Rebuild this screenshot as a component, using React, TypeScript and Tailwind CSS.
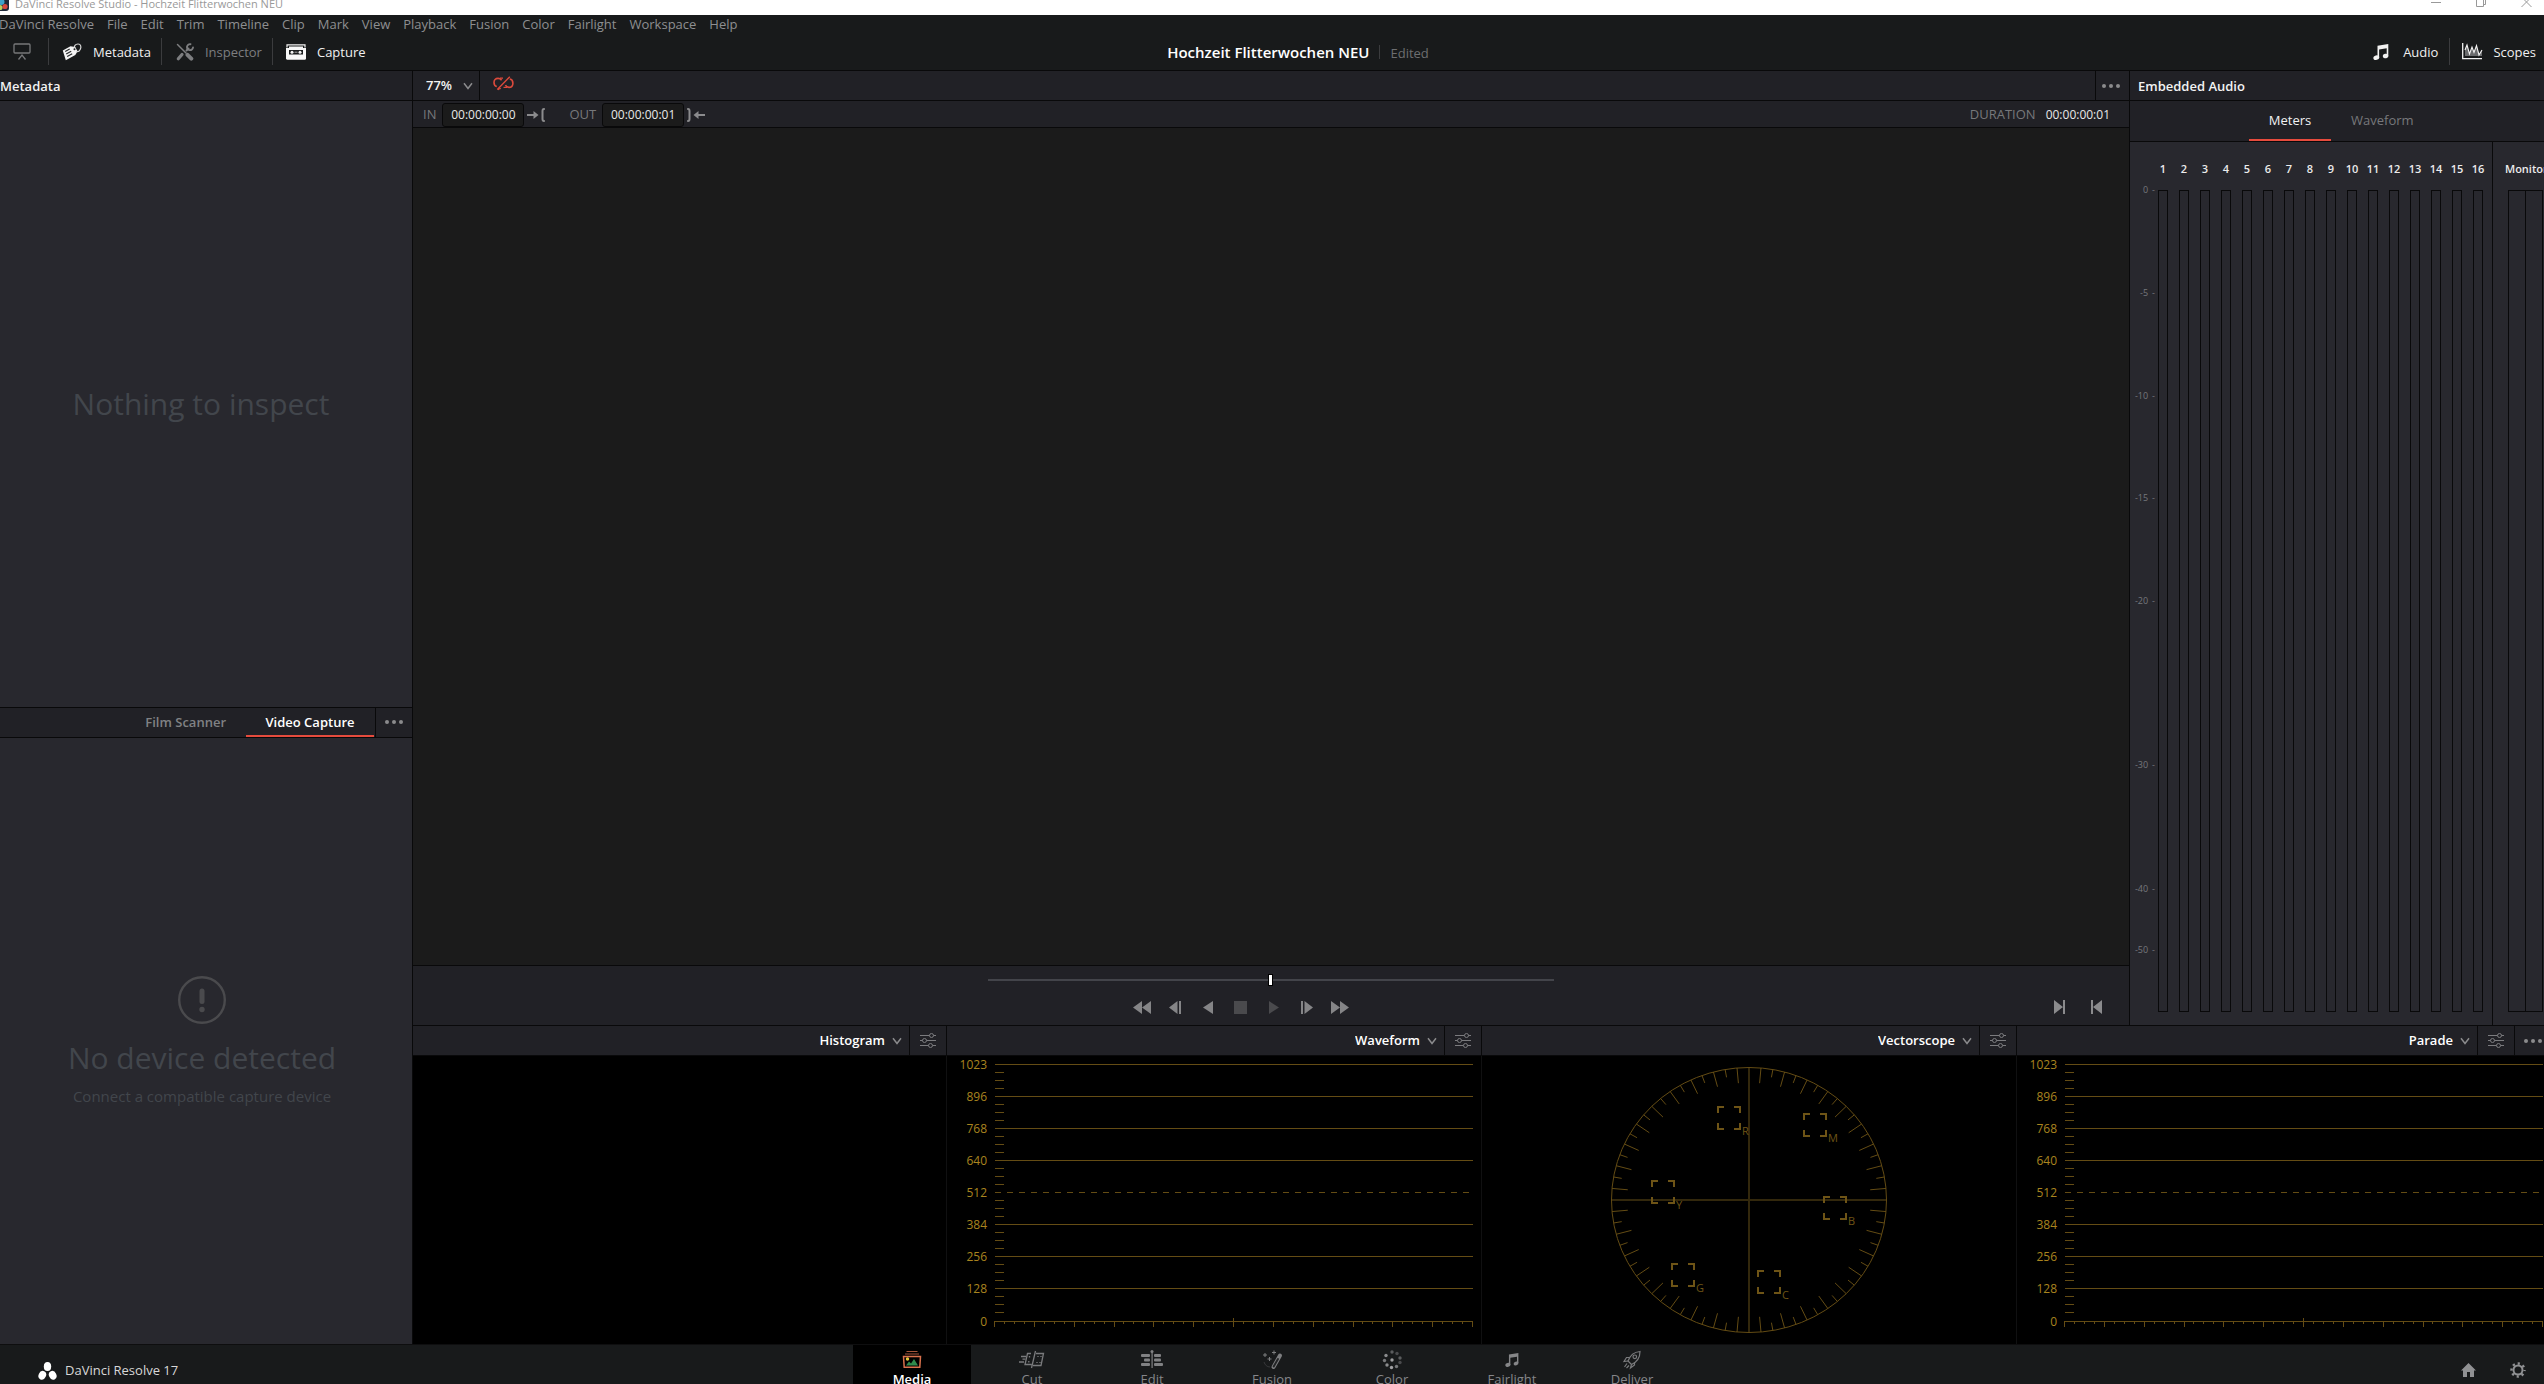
import React from "react";

const LINE = "border-[#09090a]";

function Dots({ className = "" }: { className?: string }) {
  return (
    <svg className={className} width="18" height="6" viewBox="0 0 18 6" fill="#8b8b8d" aria-hidden="true">
      <circle cx="2" cy="3" r="2" />
      <circle cx="9" cy="3" r="2" />
      <circle cx="16" cy="3" r="2" />
    </svg>
  );
}

function Chevron() {
  return (
    <svg width="10" height="8" viewBox="0 0 10 8" fill="none" stroke="#8b8b8d" strokeWidth="1.5" aria-hidden="true">
      <path d="M1 1.2 5 6.4 9 1.2" />
    </svg>
  );
}

function SlidersIcon() {
  return (
    <svg width="16" height="16" viewBox="0 0 16 16" fill="none" stroke="#7b7b7e" strokeWidth="1" aria-hidden="true">
      <path d="M0 2.500h9.500M13.500 2.500H16M0 7.500h2.500M6.500 7.500H16M0 12.500h8.500M12.500 12.500H16" />
      <circle cx="11.500" cy="2.500" r="2" />
      <circle cx="4.500" cy="7.500" r="2" />
      <circle cx="10.500" cy="12.500" r="2" />
    </svg>
  );
}

/* ---------- Title bar and menu ---------- */

function TitleBar() {
  return (
    <div className="relative flex h-[15px] shrink-0 items-start justify-between overflow-hidden bg-white text-[#999]">
      <div className="-mt-1 flex items-center gap-1.5">
        <svg width="9" height="14" viewBox="0 0 9 14" aria-hidden="true">
          <rect x="-6" y="0" width="15" height="14" rx="3" fill="#1f2a3a" />
          <circle cx="1.500" cy="5" r="3" fill="#3fa3c9" />
          <circle cx="0" cy="10.500" r="2.600" fill="#bcd05a" />
          <circle cx="5" cy="9.500" r="2.600" fill="#d8483c" />
        </svg>
        <span className="text-[11px] leading-4 whitespace-nowrap">DaVinci Resolve Studio - Hochzeit Flitterwochen NEU</span>
      </div>
      <div className="flex items-start gap-[35px] pr-3">
        <button type="button" aria-label="Minimize" className="block">
          <svg width="10" height="8" viewBox="0 0 10 8" fill="none" stroke="#999"><path d="M0 2.500h10" /></svg>
        </button>
        <button type="button" aria-label="Restore" className="block">
          <svg width="10" height="8" viewBox="0 0 10 8" fill="none" stroke="#999"><path d="M.5-1v7.500h7V-1M7.500 4.500h2V-1" /></svg>
        </button>
        <button type="button" aria-label="Close" className="block">
          <svg width="11" height="8" viewBox="0 0 11 8" fill="none" stroke="#999"><path d="M.5 7 9.500-2M10.500 7 1.500-2" /></svg>
        </button>
      </div>
    </div>
  );
}

const MENU = ["DaVinci Resolve", "File", "Edit", "Trim", "Timeline", "Clip", "Mark", "View", "Playback", "Fusion", "Color", "Fairlight", "Workspace", "Help"];

function Sep() {
  return <span className="h-[27px] w-px shrink-0 bg-[#3b3c3e]" />;
}

function PresenterIcon() {
  return (
    <svg width="18" height="18" viewBox="0 0 18 18" fill="none" stroke="#77787a" strokeWidth="1.300" aria-hidden="true">
      <rect x="1" y="1" width="16" height="9" rx="1" />
      <path d="M5.500 16.500 9 12l3.500 4.500" />
    </svg>
  );
}

function TagIcon() {
  return (
    <svg width="20" height="18" viewBox="0 0 20 18" aria-hidden="true">
      <path d="M0.800 7.600 8.500 3.300l4.800.6 2.200 4.300L13.300 12 3.800 17.300z" fill="#f4f4f4" />
      <path d="M3.200 8.500l4.500-2.500M4.200 11l5-2.800M5.200 13.500l5-2.800" stroke="#26282a" strokeWidth="1.100" />
      <path d="M12.500 6.500C11.500 3 13.500 1 16 1c3 0 3.500 3 2.200 5.500-.8 1.600-2.500 2.500-4 2" fill="none" stroke="#d9d9d9" strokeWidth="1.200" />
      <circle cx="12.500" cy="6.300" r="1" fill="#26282a" />
    </svg>
  );
}

function ToolsIcon() {
  return (
    <svg width="18" height="18" viewBox="0 0 18 18" aria-hidden="true">
      <g stroke="#7d7e80" strokeLinecap="round" fill="none">
        <path d="M1.500 1.500 10 10" strokeWidth="1.500" />
        <path d="M11.500 11.800l3.800 3.800" strokeWidth="4" />
        <path d="M2.300 15.700 6 11.500" strokeWidth="3.200" />
        <path d="M10.500 7.500 12.500 5.500" strokeWidth="2" />
        <path d="M14.500 1.200a3 3 0 1 0 2.500 3.300" strokeWidth="1.900" />
      </g>
    </svg>
  );
}

function CaptureIcon() {
  return (
    <svg width="20" height="16" viewBox="0 0 20 16" aria-hidden="true">
      <path d="M1 3.500V.8h18v2.700" fill="none" stroke="#f4f4f4" strokeWidth="1.200" />
      <path d="M3 2.500h14V4h3v10.500c0 .8-.5 1.200-1.200 1.200H1.200C.5 15.700 0 15.300 0 14.500V4h3z" fill="#f8f8f8" />
      <rect x="3" y="6" width="14" height="4.500" fill="#191b1c" />
      <circle cx="6" cy="8.200" r="1.500" fill="#f4f4f4" />
      <circle cx="14" cy="8.200" r="1.500" fill="#f4f4f4" />
      <path d="M8.500 8.200h3" stroke="#aaa" />
    </svg>
  );
}

function NoteIcon({ size = 16, color = "#f2f2f2" }: { size?: number; color?: string }) {
  return (
    <svg width={size} height={size} viewBox="0 0 16 16" aria-hidden="true" fill={color}>
      <path d="M4.500 1.800 15.300 0v11.500h-1.600V4.300L6.100 5.500v8H4.500z" />
      <ellipse cx="3.300" cy="13.600" rx="3" ry="2.300" transform="rotate(-15 3.300 13.600)" />
      <ellipse cx="12.600" cy="12" rx="2.800" ry="2.200" transform="rotate(-15 12.600 12)" />
    </svg>
  );
}

function ScopesIcon() {
  return (
    <svg width="21" height="17" viewBox="0 0 21 17" aria-hidden="true">
      <path d="M3 13V6l2-4 2.500 9L10 4l2 5 2.500-6L17 11l3-4v6z" fill="#6a6b6d" />
      <path d="M3 7 5 2l2.500 9L10 4l2 5.500L14.500 2.500 17 12l3-5" fill="none" stroke="#f2f2f2" strokeWidth="1.100" />
      <path d="M.7 0v15.700H20" fill="none" stroke="#f2f2f2" strokeWidth="1.300" />
    </svg>
  );
}

function AppHeader() {
  return (
    <header className={`shrink-0 border-b ${LINE} bg-[#181a1b]`}>
      <nav className="-ml-px flex h-[18px] items-center gap-[13px] text-[13px] leading-[18px] text-[#8e8f91]">
        {MENU.map((m) => (
          <button key={m} type="button" className="whitespace-nowrap">{m}</button>
        ))}
      </nav>
      <div className="grid h-[37px] grid-cols-[1fr_auto_1fr] items-center text-[13px] leading-[18px] text-[#f0f0f0]">
        <div className="flex items-center">
          <button type="button" aria-label="Presentation" className="mr-[17px] ml-[13px]"><PresenterIcon /></button>
          <Sep />
          <button type="button" className="flex items-center gap-[11px] pr-[10px] pl-[13px]"><TagIcon />Metadata</button>
          <Sep />
          <button type="button" className="flex items-center gap-[11px] pr-[10px] pl-[14px] text-[#7d7e80]"><ToolsIcon />Inspector</button>
          <Sep />
          <button type="button" className="flex items-center gap-[11px] pl-[13px]"><CaptureIcon />Capture</button>
        </div>
        <div className="flex items-center pl-[52px]">
          <h1 className="text-[15px] leading-5 font-semibold text-white">Hochzeit Flitterwochen NEU</h1>
          <span className="mx-[10px] h-[14px] w-px bg-[#3b3c3e]" />
          <span className="pt-0.5 text-[#6d6e70]">Edited</span>
        </div>
        <div className="flex items-center justify-end">
          <button type="button" className="flex items-center gap-[14px] pr-[11px]"><NoteIcon />Audio</button>
          <Sep />
          <button type="button" className="flex items-center gap-[10px] pr-2 pl-3"><ScopesIcon />Scopes</button>
        </div>
      </div>
    </header>
  );
}

/* ---------- Left column ---------- */

function LeftColumn() {
  return (
    <aside className={`flex w-[413px] shrink-0 flex-col border-r ${LINE} bg-[#28282e]`}>
      <section className="flex flex-[636] flex-col">
        <h2 className={`flex h-[30px] items-center border-b ${LINE} bg-[#212126] pt-0.5 text-[13px] font-semibold text-[#f2f2f2]`}>Metadata</h2>
        <div className="flex flex-1 items-center justify-center pr-[10px]">
          <p className="text-[30px] leading-9 text-[#42464c]">Nothing to inspect</p>
        </div>
      </section>
      <section className={`flex flex-[637] flex-col border-t ${LINE}`}>
        <div className={`flex h-[30px] justify-end border-b ${LINE} bg-[#212126] text-[13px] font-semibold`} role="tablist">
          <button type="button" role="tab" aria-selected="false" className="px-5 pt-0.5 text-[#808184]">Film Scanner</button>
          <button type="button" role="tab" aria-selected="true" className="w-[128px] border-b-2 border-[#e64b3d] pt-1 text-white">Video Capture</button>
          <button type="button" aria-label="Capture options" className={`ml-px flex w-[37px] items-center border-l ${LINE} pl-[9px]`}><Dots /></button>
        </div>
        <div className="flex flex-1 flex-col items-center justify-center pt-0.5 pr-2 text-[#42464c]">
          <svg width="48" height="48" viewBox="0 0 48 48" fill="none" stroke="#4a4a4d" aria-hidden="true">
            <circle cx="24" cy="24" r="22.800" strokeWidth="2.400" />
            <path d="M24 15v10.500" strokeWidth="5" strokeLinecap="round" />
            <circle cx="24" cy="33.500" r="2.700" fill="#4a4a4d" stroke="none" />
          </svg>
          <p className="mt-4 text-[30px] leading-9">No device detected</p>
          <p className="mt-2 text-[15px] leading-6">Connect a compatible capture device</p>
        </div>
      </section>
    </aside>
  );
}

/* ---------- Viewer ---------- */

function TimecodeField({ id, label, value }: { id: string; label: string; value: string }) {
  return (
    <>
      <label htmlFor={id} className="mr-1.5 text-[#77787b]">{label}</label>
      <input id={id} defaultValue={value} className="h-6 w-[82px] rounded-[3px] border border-[#09090a] bg-[#1b1b1b] text-center text-xs text-[#e8e8e8]" />
    </>
  );
}

const TRANSPORT: { name: string; w: number; d: string; dim?: boolean }[] = [
  { name: "Fast reverse", w: 18, d: "M9 0v13L0 6.500zM18 0v13L9 6.500z" },
  { name: "Previous frame", w: 12, d: "M8.500 0v13L0 6.500zM10 0h2v13h-2z" },
  { name: "Play reverse", w: 10, d: "M10 0v13L0 6.500z" },
  { name: "Stop", w: 13, d: "M0 0h13v13H0z", dim: true },
  { name: "Play", w: 10, d: "M0 0v13l10-6.500z", dim: true },
  { name: "Next frame", w: 12, d: "M3.500 0v13l8.500-6.500zM0 0h2v13H0z" },
  { name: "Fast forward", w: 18, d: "M9 0v13l9-6.500zM0 0v13l9-6.500z" },
];

function Viewer() {
  return (
    <section className="flex min-w-0 flex-1 flex-col bg-[#1b1b1b]">
      <div className={`flex h-[30px] shrink-0 items-stretch border-b ${LINE} bg-[#212126]`}>
        <label className={`flex w-[67px] items-center border-r ${LINE} pl-[13px]`}>
          <select aria-label="Zoom" defaultValue="77%" className="field-sizing-content appearance-none bg-transparent text-[13px] font-semibold text-[#f2f2f2] outline-none">
            <option>77%</option>
            <option>100%</option>
          </select>
          <span className="ml-[11px]"><Chevron /></span>
        </label>
        <button type="button" aria-label="Bypass color grades" className="mb-1 ml-[13px]">
          <svg width="21" height="15" viewBox="0 0 21 15" fill="none" stroke="#dc4a3c" strokeWidth="1.600" aria-hidden="true">
            <path d="M8.600 4.200C7.500 2.800 6.300 2.400 5 2.400 2.500 2.400 1 4.300 1 6.500s1.200 3.600 2.800 4" />
            <path d="M7 2.200h3M7.800 12.500c-1.200.3-1.800 0-2.800 1.500" strokeWidth="1.200" />
            <path d="M12.400 9.200c.8 1.500 2 2.200 3.500 2.200 2.500 0 4-1.800 4-4.200S18.300 3.300 16.800 3" />
            <path d="M10.500 11.400h3.500" strokeWidth="1.200" />
            <path d="M4.300 13.500 16.800.8" strokeWidth="1.400" />
          </svg>
        </button>
        <button type="button" aria-label="Viewer options" className={`ml-auto flex w-[34px] items-center border-l ${LINE} pl-[6px]`}><Dots /></button>
      </div>
      <div className={`flex h-[27px] shrink-0 items-center border-b ${LINE} bg-[#212126] pt-px pl-[10px] text-[13px]`}>
        <TimecodeField id="tc-in" label="IN" value="00:00:00:00" />
        <button type="button" aria-label="Mark in" className="mr-6 ml-[3px]">
          <svg width="18" height="14" viewBox="0 0 18 14" fill="none" stroke="#8b8b8d" strokeWidth="2" aria-hidden="true">
            <path d="M0 7h8" /><path d="M6.500 3v8l5-4z" fill="#8b8b8d" stroke="none" /><path d="M17.800 1H17q-1.500 0-1.500 2v8q0 2 1.500 2h.8" />
          </svg>
        </button>
        <TimecodeField id="tc-out" label="OUT" value="00:00:00:01" />
        <button type="button" aria-label="Mark out" className="ml-[3px]">
          <svg width="18" height="14" viewBox="0 0 18 14" fill="none" stroke="#8b8b8d" strokeWidth="2" aria-hidden="true">
            <path d="M18 7h-8" /><path d="M11.500 3v8l-5-4z" fill="#8b8b8d" stroke="none" /><path d="M.2 1H1q1.500 0 1.500 2v8q0 2-1.500 2H.2" />
          </svg>
        </button>
        <div className="mr-[19px] ml-auto flex items-center gap-[10px]">
          <span className="text-[#77787b]">DURATION</span>
          <span className="text-xs text-[#e8e8e8]">00:00:00:01</span>
        </div>
      </div>
      <div className="flex-1" />
      <div className={`h-[60px] shrink-0 border-t ${LINE} bg-[#212126]`}>
        <input
          type="range"
          aria-label="Playhead"
          defaultValue={50}
          className="mx-auto mt-2 block h-3 w-[33%] appearance-none bg-transparent [&::-webkit-slider-runnable-track]:h-[2px] [&::-webkit-slider-runnable-track]:bg-[#43444a] [&::-webkit-slider-thumb]:-mt-[5px] [&::-webkit-slider-thumb]:h-3 [&::-webkit-slider-thumb]:w-[5px] [&::-webkit-slider-thumb]:appearance-none [&::-webkit-slider-thumb]:border [&::-webkit-slider-thumb]:border-black [&::-webkit-slider-thumb]:bg-white"
        />
        <div className="mt-[14px] grid grid-cols-[712fr_auto_773fr] items-center">
          <span />
          <div className="flex items-center">
            {TRANSPORT.map((t) => (
              <button key={t.name} type="button" aria-label={t.name} className="flex w-[33px] justify-center">
                <svg width={t.w} height="13" viewBox={`0 0 ${t.w} 13`} fill={t.dim ? "#4a4a4d" : "#858587"} aria-hidden="true"><path d={t.d} /></svg>
              </button>
            ))}
          </div>
          <div className="flex justify-end gap-[26px] pr-[27px]">
            <button type="button" aria-label="Go to next clip" className="block">
              <svg width="11" height="14" viewBox="0 0 11 14" fill="#8b8b8d"><path d="M0 0v14l9-7zM9 0h2v14H9z" /></svg>
            </button>
            <button type="button" aria-label="Go to previous clip" className="block">
              <svg width="11" height="14" viewBox="0 0 11 14" fill="#8b8b8d"><path d="M11 0v14L2 7zM0 0h2v14H0z" /></svg>
            </button>
          </div>
        </div>
      </div>
    </section>
  );
}

/* ---------- Audio meters ---------- */

const SCALE: [string, number][] = [["0", 0], ["-5", 12.5], ["-10", 25], ["-15", 37.5], ["-20", 50], ["-30", 70], ["-40", 85], ["-50", 92.5]];
const CHANNELS = Array.from({ length: 16 }, (_, i) => i + 1);

function AudioPanel() {
  return (
    <aside className={`flex w-[415px] shrink-0 flex-col border-l ${LINE} bg-[#28282e]`}>
      <h2 className={`flex h-[30px] items-center border-b ${LINE} bg-[#212126] pt-0.5 pl-2 text-[13px] font-semibold text-[#f2f2f2]`}>Embedded Audio</h2>
      <div role="tablist" className={`flex h-[41px] border-b ${LINE} bg-[#212126] pl-[119px] text-[13px]`}>
        <button type="button" role="tab" aria-selected="true" className="w-[82px] border-b-2 border-[#e64b3d] pt-0.5 text-[#f2f2f2]">Meters</button>
        <button type="button" role="tab" aria-selected="false" className="px-5 text-[#77787b]">Waveform</button>
      </div>
      <div className="flex flex-1">
        <div className="flex flex-1 pb-[13px]">
          <div className="flex w-7 flex-col pt-12">
            <div className="relative flex-1 text-[9px] leading-3 text-[#76777c]">
              {SCALE.map(([t, p]) => (
                <span key={t} className="absolute right-[3px] flex -translate-y-1/2 gap-1 whitespace-nowrap" style={{ top: `${p}%` }}>
                  <span>{t}</span>
                  <span>-</span>
                </span>
              ))}
            </div>
          </div>
          <div className="flex flex-1 justify-between pr-[9px]">
            {CHANNELS.map((c) => (
              <div key={c} className="flex w-[10px] flex-col">
                <span className="flex h-12 items-center justify-center pt-1.5 text-[11px] font-semibold text-[#ececec]">{c}</span>
                <span className={`flex-1 border ${LINE}`} />
              </div>
            ))}
          </div>
        </div>
        <div className={`flex w-[52px] flex-col overflow-hidden border-l ${LINE} pb-[13px]`}>
          <span className="flex h-12 items-center pt-1.5 pl-3 text-[11px] font-semibold whitespace-nowrap text-[#ececec]">Monitor</span>
          <div className={`mr-px ml-[15px] grid flex-1 grid-cols-2 border ${LINE}`}>
            <span className={`border-r ${LINE}`} />
            <span />
          </div>
        </div>
      </div>
    </aside>
  );
}

/* ---------- Scopes ---------- */

const LEVELS: [number, number][] = [[1023, 8.5], [896, 40.5], [768, 72.5], [640, 104.5], [512, 136.5], [384, 168.5], [256, 200.5], [128, 232.5], [0, 265.5]];

function LevelGraph({ name }: { name: string }) {
  return (
    <svg role="img" aria-label={name} className="block h-[288px] w-full" viewBox="0 0 527 288" preserveAspectRatio="xMinYMin meet">
      <g stroke="#644c14" strokeWidth="1" fill="none">
        {LEVELS.map(([v, y], i) => (
          <g key={v}>
            <line x1="48" x2="526" y1={y} y2={y} strokeDasharray={v === 512 ? "6 6" : undefined} />
            {i < 8 && [8, 16, 24].map((d) => <line key={d} x1="48" x2="57" y1={y + d} y2={y + d} />)}
          </g>
        ))}
        {Array.from({ length: 49 }, (_, i) => {
          const x = 48 + Math.round((i * 478) / 48) - 0.5;
          return <line key={i} x1={x} x2={x} y1={i === 24 ? 262 : 265} y2={i % 4 === 0 ? 271 : 268} />;
        })}
      </g>
      <g fill="#a9841f" fontSize="12" textAnchor="end">
        {LEVELS.map(([v, y]) => (
          <text key={v} x="40" y={y + 4.5}>{v}</text>
        ))}
      </g>
    </svg>
  );
}

const TARGETS: [string, number, number][] = [["R", -20, -82], ["M", 66, -75], ["Y", -86, -8], ["B", 86, 8], ["G", -66, 75], ["C", 20, 82]];

function VectorGraph() {
  const cx = 267, cy = 144, rx = 137.5, ry = 132.5;
  const ticks = Array.from({ length: 72 }, (_, i) => i).filter((i) => i % 18 !== 0);
  return (
    <svg role="img" aria-label="Vectorscope" className="block h-[288px] w-full" viewBox="0 0 534 288" preserveAspectRatio="xMidYMin meet">
      <path d={`M${cx} ${cy - ry}V${cy + ry}M${cx - rx} ${cy}H${cx + rx}`} stroke="#33280c" strokeWidth="2" />
      <g stroke="#644c14" fill="none">
        <ellipse cx={cx} cy={cy} rx={rx} ry={ry} />
        {ticks.map((i) => {
          const a = (i * 5 * Math.PI) / 180;
          const k = i % 2 ? 0.885 : 0.94;
          return <line key={i} x1={cx + rx * Math.cos(a)} y1={cy + ry * Math.sin(a)} x2={cx + rx * k * Math.cos(a)} y2={cy + ry * k * Math.sin(a)} />;
        })}
      </g>
      {TARGETS.map(([t, dx, dy]) => (
        <g key={t} transform={`translate(${cx + dx} ${cy + dy})`}>
          <path d="M-11-5v-6h6M5-11h6v6M11 5v6H5M-5 11h-6V5" fill="none" stroke="#6e5416" strokeWidth="2" />
          <text x="13" y="17" fontSize="11" fill="#6e5416">{t}</text>
        </g>
      ))}
    </svg>
  );
}

const SCOPES = ["Histogram", "Waveform", "Vectorscope", "Parade"];

function Scopes() {
  return (
    <section className={`grid shrink-0 grid-cols-[534fr_535fr_535fr_527fr] border-t ${LINE}`}>
      {SCOPES.map((s, i) => (
        <div key={s} className="min-w-0">
          <div className={`flex h-[30px] items-stretch justify-end border-b ${LINE} bg-[#212126] ${i < 3 ? "border-r" : ""}`}>
            <label className="flex items-center gap-[7px] pr-[7px]">
              <select aria-label={`Scope ${i + 1}`} defaultValue={s} className="field-sizing-content appearance-none bg-transparent pt-px text-[13px] font-semibold text-white outline-none">
                {SCOPES.map((o) => <option key={o}>{o}</option>)}
              </select>
              <Chevron />
            </label>
            <button type="button" aria-label={`${s} settings`} className={`flex w-[37px] items-center border-l ${LINE} pl-[10px]`}><SlidersIcon /></button>
            {i === 3 && (
              <button type="button" aria-label="Scope options" className={`flex w-[30px] items-center border-l ${LINE} pl-[9px]`}><Dots /></button>
            )}
          </div>
          <div className={`h-[288px] bg-black ${i < 3 ? "border-r border-[#101011]" : ""}`}>
            {(i === 1 || i === 3) && <LevelGraph name={s} />}
            {i === 2 && <VectorGraph />}
          </div>
        </div>
      ))}
    </section>
  );
}

/* ---------- Footer ---------- */

function MediaIcon() {
  return (
    <svg width="20" height="20" viewBox="0 0 20 20" fill="none" aria-hidden="true">
      <path d="M4.500 1.500h11M3 4h14" stroke="#a5553a" strokeWidth="1.200" />
      <path d="M1.500 6.500h17l-.7 10.800H2.200z" stroke="#d9714c" strokeWidth="1.500" />
      <path d="M4 15.500l3-4 2 2 3-4.500 4 6.500z" fill="#2f8a4c" />
      <circle cx="5.500" cy="9" r="1.700" fill="#e5c53b" />
    </svg>
  );
}
function CutIcon() {
  return (
    <svg width="26" height="20" viewBox="0 0 26 20" fill="none" stroke="#7a7b7d" strokeWidth="1.300" aria-hidden="true">
      <path d="M12 3.500H8.500L6 14.500h6.500M17 3.500h7.500L22 15.500h-8M16.500 1 12.500 18" />
      <path d="M2 6.500h5M3.500 9.200h3M0 12h5" />
      <path d="M10.500 6v1.500M9.800 11v1.500M19 6v1M18 12v1M22 6v1M21 12v1" strokeDasharray="1.500 1" />
    </svg>
  );
}
function EditIcon() {
  return (
    <svg width="24" height="20" viewBox="0 0 24 20" fill="#808183" aria-hidden="true">
      <rect x="1" y="4" width="9" height="3" rx="1" /><rect x="4" y="8.500" width="6" height="3" rx="1" /><rect x="1" y="13" width="9" height="3" rx="1" />
      <rect x="14" y="4" width="7" height="3" rx="1" /><rect x="14" y="8.500" width="7" height="3" rx="1" /><rect x="14" y="13" width="9" height="3" rx="1" />
      <path d="M11.500 2h1.200v16h-1.200z" /><circle cx="12" cy="1.500" r="1.500" />
    </svg>
  );
}
function FusionIcon() {
  return (
    <svg width="24" height="20" viewBox="0 0 24 20" fill="none" stroke="#7d7e80" aria-hidden="true">
      <path d="M13.500 17 20 5.500" strokeWidth="4" strokeLinecap="round" />
      <path d="M13.700 16.500 18 9" strokeWidth="2" stroke="#232526" strokeLinecap="round" />
      <path d="M14 .5v4M12 2.500h4M5 3v4M3 5h4M9.500 7v4M7.500 9h4" strokeWidth="1" />
      <path d="M4 12c1 3 3 5 6 5" stroke="#37383a" />
    </svg>
  );
}
function ColorIcon() {
  const dots: [number, number, string][] = [[10, 2, "#5b5c5e"], [15, 3.5, "#4a4b4d"], [18, 8, "#5b5c5e"], [18, 12.500, "#4a4b4d"], [14.500, 16.500, "#77787a"], [9.500, 17.500, "#a0a0a2"], [5, 15, "#8b8c8e"], [2.500, 10.500, "#77787a"], [4, 5.500, "#8b8c8e"], [10, 10, "#a0a0a2"]];
  return (
    <svg width="20" height="20" viewBox="0 0 20 20" aria-hidden="true">
      {dots.map(([x, y, f], i) => <circle key={i} cx={x} cy={y} r="1.700" fill={f} />)}
    </svg>
  );
}
function DeliverIcon() {
  return (
    <svg width="20" height="20" viewBox="0 0 20 20" fill="none" stroke="#7a7b7d" strokeWidth="1.200" aria-hidden="true">
      <path d="M6 11C8 5.500 11.500 2 18 1.500c0 6-3 10.500-8.500 13z" />
      <path d="M7.500 7.500H4.500L2 11.500l4-.5M12.500 12.500V15L8.500 18l1-3.500" />
      <circle cx="12.800" cy="6.800" r="1.800" />
      <path d="M5 13.500 2.500 17M7 15.500 4.500 18" />
    </svg>
  );
}

const PAGES: [string, React.ReactNode][] = [
  ["Media", <MediaIcon />],
  ["Cut", <CutIcon />],
  ["Edit", <EditIcon />],
  ["Fusion", <FusionIcon />],
  ["Color", <ColorIcon />],
  ["Fairlight", <NoteIcon size={14} color="#858688" />],
  ["Deliver", <DeliverIcon />],
];

function Footer() {
  return (
    <footer className="grid h-10 shrink-0 grid-cols-[1fr_auto_1fr] overflow-hidden border-t border-[#0e0e0f] bg-[#181a1b]">
      <div className="flex items-center gap-2 pt-2 pl-[38px]">
        <svg width="19" height="18" viewBox="0 0 19 18" fill="#fff" aria-hidden="true">
          <ellipse cx="9.500" cy="4.500" rx="3.700" ry="4.500" />
          <ellipse cx="4.300" cy="13.300" rx="3.700" ry="4.500" transform="rotate(25 4.300 13.300)" />
          <ellipse cx="14.700" cy="13.300" rx="3.700" ry="4.500" transform="rotate(-25 14.700 13.300)" />
        </svg>
        <span className="text-[13px] text-[#d8d8d8]">DaVinci Resolve 17</span>
      </div>
      <nav className="flex gap-0.5">
        {PAGES.map(([name, icon], i) => (
          <button
            key={name}
            type="button"
            className={i === 0
              ? "flex w-[118px] flex-col items-center justify-start bg-black pt-[5px] text-[13px] font-semibold text-white"
              : "flex w-[118px] flex-col items-center justify-start pt-[5px] text-[13px] text-[#85868a]"}
          >
            <span className="flex h-5 shrink-0 items-center">{icon}</span>
            <span className="leading-[18px]">{name}</span>
          </button>
        ))}
      </nav>
      <div className="flex items-center justify-end gap-[34px] pt-1.5 pr-[18px]">
        <button type="button" aria-label="Project manager" className="block">
          <svg width="15" height="14" viewBox="0 0 15 14" fill="#909193"><path d="M7.500 0 15 7.500h-2V14H9V9H6v5H2V7.500H0z" /></svg>
        </button>
        <button type="button" aria-label="Project settings" className="block">
          <svg width="16" height="16" viewBox="0 0 16 16" fill="none" stroke="#909193">
            <circle cx="8" cy="8" r="4.500" strokeWidth="2" />
            <circle cx="8" cy="8" r="6.500" strokeWidth="2.400" strokeDasharray="2.200 2.905" strokeDashoffset="1.100" />
          </svg>
        </button>
      </div>
    </footer>
  );
}

export default function App() {
  return (
    <div className="flex h-screen flex-col overflow-hidden bg-[#181a1b] font-['Open_Sans',sans-serif]">
      <TitleBar />
      <AppHeader />
      <main className="flex min-h-0 flex-1">
        <LeftColumn />
        <div className="flex min-w-0 flex-1 flex-col">
          <div className="flex min-h-0 flex-1">
            <Viewer />
            <AudioPanel />
          </div>
          <Scopes />
        </div>
      </main>
      <Footer />
    </div>
  );
}
